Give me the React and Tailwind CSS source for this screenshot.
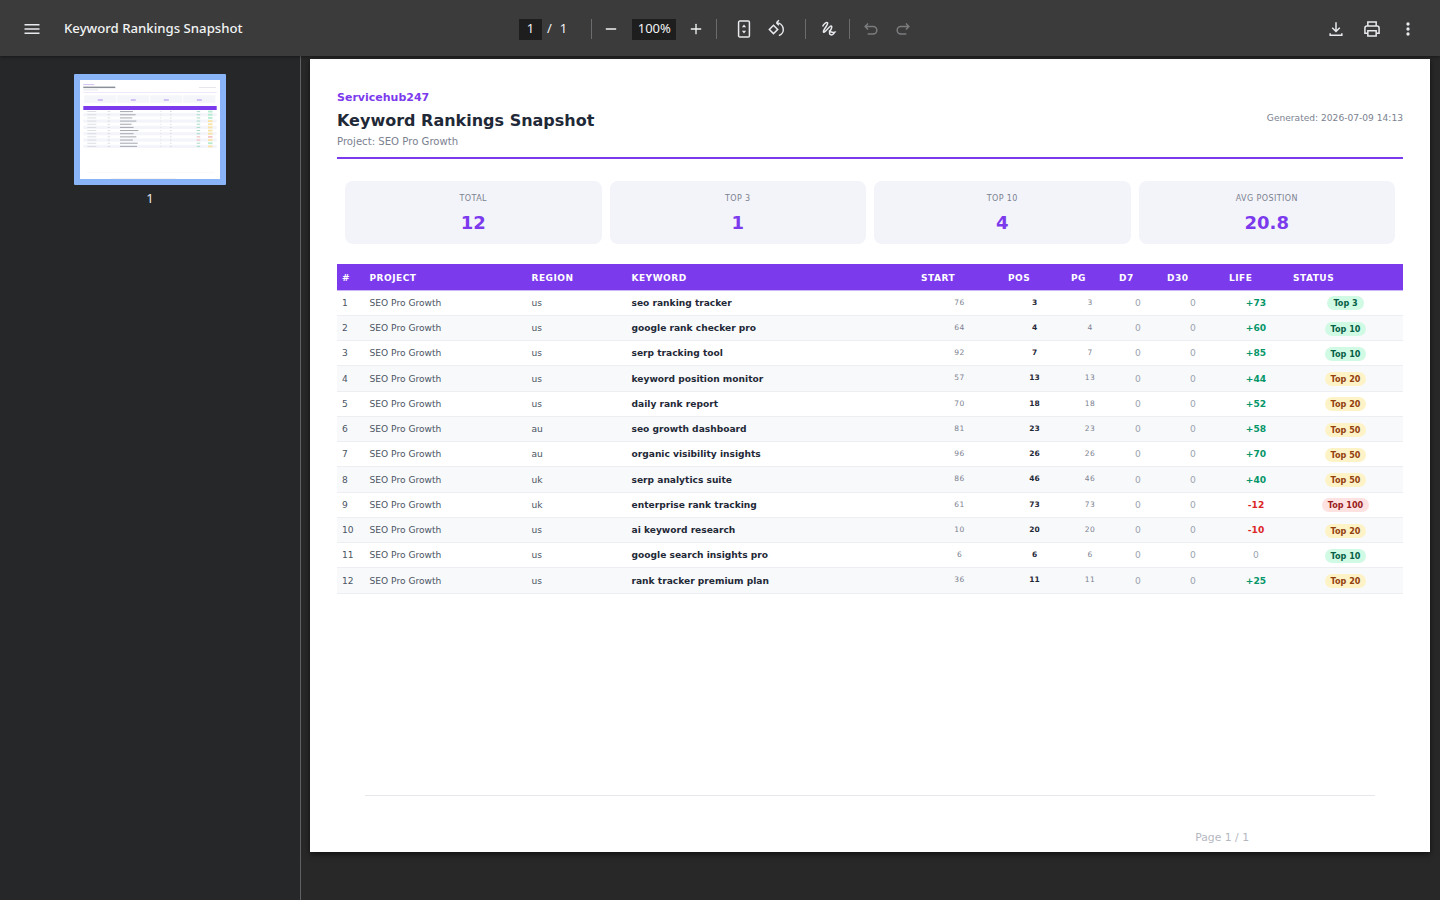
import { Minus, Plus } from "lucide-react";

const rows = [
  ["1", "us", "seo ranking tracker", "76", "3", "+73", "Top 3"],
  ["2", "us", "google rank checker pro", "64", "4", "+60", "Top 10"],
  ["3", "us", "serp tracking tool", "92", "7", "+85", "Top 10"],
  ["4", "us", "keyword position monitor", "57", "13", "+44", "Top 20"],
  ["5", "us", "daily rank report", "70", "18", "+52", "Top 20"],
  ["6", "au", "seo growth dashboard", "81", "23", "+58", "Top 50"],
  ["7", "au", "organic visibility insights", "96", "26", "+70", "Top 50"],
  ["8", "uk", "serp analytics suite", "86", "46", "+40", "Top 50"],
  ["9", "uk", "enterprise rank tracking", "61", "73", "-12", "Top 100"],
  ["10", "us", "ai keyword research", "10", "20", "-10", "Top 20"],
  ["11", "us", "google search insights pro", "6", "6", "0", "Top 10"],
  ["12", "us", "rank tracker premium plan", "36", "11", "+25", "Top 20"],
];

const stats = [
  ["TOTAL", "12"],
  ["TOP 3", "1"],
  ["TOP 10", "4"],
  ["AVG POSITION", "20.8"],
];

const headers = [
  ["#", "w-[27.5px]"],
  ["PROJECT", "w-[162px]"],
  ["REGION", "w-[100px]"],
  ["KEYWORD", "w-[289.5px]"],
  ["START", "w-[87px]"],
  ["POS", "w-[63px]"],
  ["PG", "w-[48px]"],
  ["D7", "w-[48px]"],
  ["D30", "w-[62px]"],
  ["LIFE", "w-[64px]"],
  ["STATUS", "w-[115px]"],
];

const badgeClass = (status) => {
  if (status === "Top 3" || status === "Top 10") return "bg-[#d1fae5] text-[#065f46]";
  if (status === "Top 100") return "bg-[#fee2e2] text-[#991b1b]";
  return "bg-[#fef3c7] text-[#92400e]";
};

const lifeClass = (life) => {
  if (life.startsWith("+")) return "text-[#059669] font-bold";
  if (life.startsWith("-")) return "text-[#dc2626] font-bold";
  return "text-[#9ca3af]";
};

const Icon = ({ children, className = "text-[#e8eaed]", strokeWidth = 2 }) => (
  <svg width="20" height="20" viewBox="0 0 24 24" fill="none" stroke="currentColor" strokeWidth={strokeWidth} className={className}>
    {children}
  </svg>
);

const Divider = () => <div className="w-px h-5 bg-[#6b6c6e]" />;

const Toolbar = () => (
  <header className="h-14 shrink-0 bg-[#3b3b3b] flex items-center pt-[2px] text-[#f1f3f4] font-['Noto_Sans',sans-serif] relative shadow-[0_1px_3px_rgba(0,0,0,0.4)] z-10">
    <div className="w-[300px] flex items-center pl-[22px]">
      <Icon strokeWidth={1.8}>
        <path d="M3 7h18M3 12h18M3 17h18" />
      </Icon>
      <span className="ml-[22px] text-[13.2px] font-medium whitespace-nowrap">Keyword Rankings Snapshot</span>
    </div>
    <div className="flex items-center ml-[219px] text-[13px]">
      <span className="w-[23px] h-[21px] bg-[#1e1e1e] flex items-center justify-center">1</span>
      <span className="ml-[5px]">/</span>
      <span className="ml-[8px]">1</span>
      <div className="ml-[24px] mr-[11px]"><Divider /></div>
      <Minus size={16} strokeWidth={2} />
      <span className="ml-[13px] w-[44px] h-[21px] bg-[#1e1e1e] flex items-center justify-center text-[13px]">100%</span>
      <Plus size={16} strokeWidth={2} className="ml-[12px]" />
      <div className="ml-[12px] mr-[17px]"><Divider /></div>
      <svg width="20" height="20" viewBox="0 0 24 24" className="text-[#e8eaed]">
        <rect x="5.500" y="2.500" width="13" height="19" rx="1.500" fill="none" stroke="currentColor" strokeWidth="1.800" />
        <path d="M12 6.500 14.500 10h-5zM12 17.500 9.500 14h5z" fill="currentColor" />
      </svg>
      <div className="ml-[12px]">
        <Icon strokeWidth={1.8}>
          <path d="m9 7.500 5 5-5 5-5-5z" />
          <path d="M12.500 4.500a8 8 0 0 1 3 15.500M12.500 4.500l3-3M12.500 4.500l3 3" />
        </Icon>
      </div>
      <div className="ml-[19px] mr-[12px]"><Divider /></div>
      <Icon strokeWidth={1.8}>
        <path d="M5.500 9C7 6 10 3 11.500 4.500 13 6 6 13 6.500 15.500 7 18 13 9.500 15 8.500c2-1 2 2 0 5-1.500 2.300-2 5 .5 5.500s3.500-1.500 4.500-3c-2 .5-5-.5-7-2" />
      </Icon>
      <div className="ml-[11px] mr-[11px]"><Divider /></div>
      <Icon className="text-[#7b7c7e]" strokeWidth={1.8}>
        <path d="M8.500 5.500 5 9l3.500 3.500M5 9h9.500a4.500 4.500 0 0 1 0 9H8" />
      </Icon>
      <Icon className="text-[#7b7c7e] ml-[12px]" strokeWidth={1.8}>
        <path d="M15.500 5.500 19 9l-3.500 3.500M19 9H9.500a4.500 4.500 0 0 0 0 9H16" />
      </Icon>
    </div>
    <div className="ml-auto flex items-center gap-4 pr-[22px]">
      <Icon strokeWidth={1.8}>
        <path d="M12 4v11M7.500 10.500 12 15l4.500-4.500M5 17v2.500h14V17" />
      </Icon>
      <Icon strokeWidth={1.8}>
        <path d="M7 8V3.500h10V8M7 17H3.500v-6A2.500 2.500 0 0 1 6 8.500h12a2.500 2.500 0 0 1 2.500 2.500v6H17" />
        <path d="M7 14h10v6.500H7z" />
      </Icon>
      <svg width="20" height="20" viewBox="0 0 24 24" fill="currentColor" className="text-[#e8eaed]">
        <circle cx="12" cy="6" r="2" />
        <circle cx="12" cy="12" r="2" />
        <circle cx="12" cy="18" r="2" />
      </svg>
    </div>
  </header>
);

const thumbBadge = (status) => {
  if (status === "Top 100") return "#f5c4c4";
  if (status === "Top 3" || status === "Top 10") return "#b5ecd0";
  return "#f8e3a4";
};

// mini drawing of the page for the sidebar
const Thumbnail = () => (
  <svg width="140" height="99" viewBox="0 0 140 99" className="block bg-white">
    <rect x="3.300" y="4.200" width="11" height="0.900" fill="#cbbcf2" />
    <rect x="3.300" y="6.600" width="32" height="1.500" fill="#8b8f98" />
    <rect x="3.300" y="9.500" width="15" height="0.800" fill="#e0e2e6" />
    <rect x="119" y="7" width="17" height="0.800" fill="#dfe1e5" />
    <rect x="3.300" y="12.200" width="133.400" height="0.400" fill="#d6c9f5" />
    {[4.300, 37.300, 70.300, 103.300].map((x) => (
      <g key={x}>
        <rect x={x} y="15.300" width="32" height="7.500" fill="#f5f6fa" />
        <rect x={x + 13.500} y="19.300" width="5" height="1.400" fill="#c0aaf3" />
      </g>
    ))}
    <rect x="3.300" y="26" width="133.400" height="4" fill="#7c3aed" />
    {rows.map((row, i) => {
      const y = 30 + i * 3.160;
      return (
        <g key={row[0]}>
          {i % 2 === 1 && <rect x="3.300" y={y} width="133.400" height="3.160" fill="#f3f5fa" />}
          <rect x="7.300" y={y + 1.200} width="9" height="0.800" fill="#d5d7dc" />
          <rect x="27.600" y={y + 1.200} width="2.500" height="0.800" fill="#d5d7dc" />
          <rect x="40" y={y + 1.100} width={row[2].length * 0.68} height="1" fill="#a4a7ae" />
          <rect x="80" y={y + 1.200} width="1.500" height="0.800" fill="#e2e3e7" />
          <rect x="90" y={y + 1.200} width="1.500" height="0.800" fill="#d2d3d8" />
          <rect x="116.700" y={y + 1.100} width="3.500" height="1" fill={row[5].startsWith("-") ? "#eeb4b4" : "#a9dcc7"} />
          <rect x="128" y={y + 0.700} width="4.500" height="1.800" fill={thumbBadge(row[6])} />
        </g>
      );
    })}
    <rect x="7" y="92.300" width="127" height="0.300" fill="#eeeeee" />
    <rect x="31" y="98" width="65" height="0.500" fill="#e8e8e8" />
  </svg>
);

const Sidebar = () => (
  <aside className="w-[301px] shrink-0 bg-[#262728] border-r border-[#5f6062] flex flex-col items-center pt-[18px] font-['Noto_Sans',sans-serif]">
    <div className="border-[6px] border-[#8ab4f8] rounded-[1px]">
      <Thumbnail />
    </div>
    <span className="mt-[4px] text-[13px] leading-[18px] text-[#e8eaed]">1</span>
  </aside>
);

const Page = () => (
  <div className="w-[1120px] h-[793px] bg-white flex flex-col px-[27px] pt-[31px] shadow-[0_2px_6px_rgba(0,0,0,0.6)] font-['DejaVu_Sans',sans-serif]">
    <div className="flex justify-between items-start border-b-2 border-[#7c3aed] h-[69px]">
      <div>
        <div className="text-[11px] leading-[16px] font-bold text-[#7c3aed]">Servicehub247</div>
        <h1 className="text-[16px] leading-[22px] font-bold text-[#1f2937] mt-[4px]">Keyword Rankings Snapshot</h1>
        <div className="text-[10.15px] leading-[14px] text-[#7b8190] mt-[3px]">Project: SEO Pro Growth</div>
      </div>
      <div className="text-[9.1px] leading-[12px] text-[#7b8190] mt-[22px]">Generated: 2026-07-09 14:13</div>
    </div>

    <div className="flex gap-2 px-2 mt-[22px]">
      {stats.map(([label, value]) => (
        <div key={label} className="flex-1 h-[63px] bg-[#f3f4f9] rounded-lg flex flex-col items-center pt-[12px]">
          <div className="text-[8px] leading-[12px] tracking-[0.4px] text-[#7b8190]">{label}</div>
          <div className="text-[18px] leading-[24px] font-bold text-[#7c3aed] mt-[6px]">{value}</div>
        </div>
      ))}
    </div>

    <table className="table-fixed w-full border-collapse mt-5">
      <thead>
        <tr className="bg-[#7c3aed] h-[26px] text-white border-b border-[#c9b5f3]">
          {headers.map(([h, w]) => (
            <th key={h} className={`${w} pl-[5px] pt-[3px] text-left text-[9px] leading-[14px] font-bold tracking-[0.5px]`}>{h}</th>
          ))}
        </tr>
      </thead>
      <tbody>
        {rows.map((row, i) => (
          <tr key={row[0]} className={`h-[25.270px] border-b border-[#eceef2] text-[9.1px] ${i % 2 === 1 ? "bg-[#f8f9fb]" : "bg-white"}`}>
            <td className="pl-[5px] pt-[2px] text-[#4b5563]">{row[0]}</td>
            <td className="pl-[5px] pt-[2px] text-[#4b5563]">SEO Pro Growth</td>
            <td className="pl-[5px] pt-[2px] text-[#4b5563]">{row[1]}</td>
            <td className="pl-[5px] pt-[2px] font-bold text-[#1f2937]">{row[2]}</td>
            <td className="pb-px text-center text-[7.5px] tracking-[0.4px] text-[#7b8190]">{row[3]}</td>
            <td className="pb-px text-center text-[7.5px] font-bold text-[#1f2937]">{row[4]}</td>
            <td className="pb-px text-center text-[7.5px] tracking-[0.4px] text-[#7b8190]">{row[4]}</td>
            <td className="pt-[2px] text-center text-[#9ca3af]">0</td>
            <td className="pt-[2px] text-center text-[#9ca3af]">0</td>
            <td className={`pt-[2px] text-center ${lifeClass(row[5])}`}>{row[5]}</td>
            <td className="pt-[2px] text-center">
              <span className={`inline-block rounded-full px-[6px] text-[8.1px] leading-[14px] font-bold ${badgeClass(row[6])}`}>{row[6]}</span>
            </td>
          </tr>
        ))}
      </tbody>
    </table>

    <div className="mt-auto mx-[28px] border-t border-[#e5e7eb] h-[57px] flex items-end justify-end pr-[126px] pb-[7px]">
      <span className="text-[10.8px] leading-[14px] text-[#b5b7bf]">Page 1 / 1</span>
    </div>
  </div>
);

export default function App() {
  return (
    <div className="w-[1440px] h-[900px] overflow-hidden flex flex-col bg-[#282828]">
      <Toolbar />
      <div className="flex-1 flex min-h-0">
        <Sidebar />
        <main className="flex-1 pl-[9px] pt-[3px]">
          <Page />
        </main>
      </div>
    </div>
  );
}
